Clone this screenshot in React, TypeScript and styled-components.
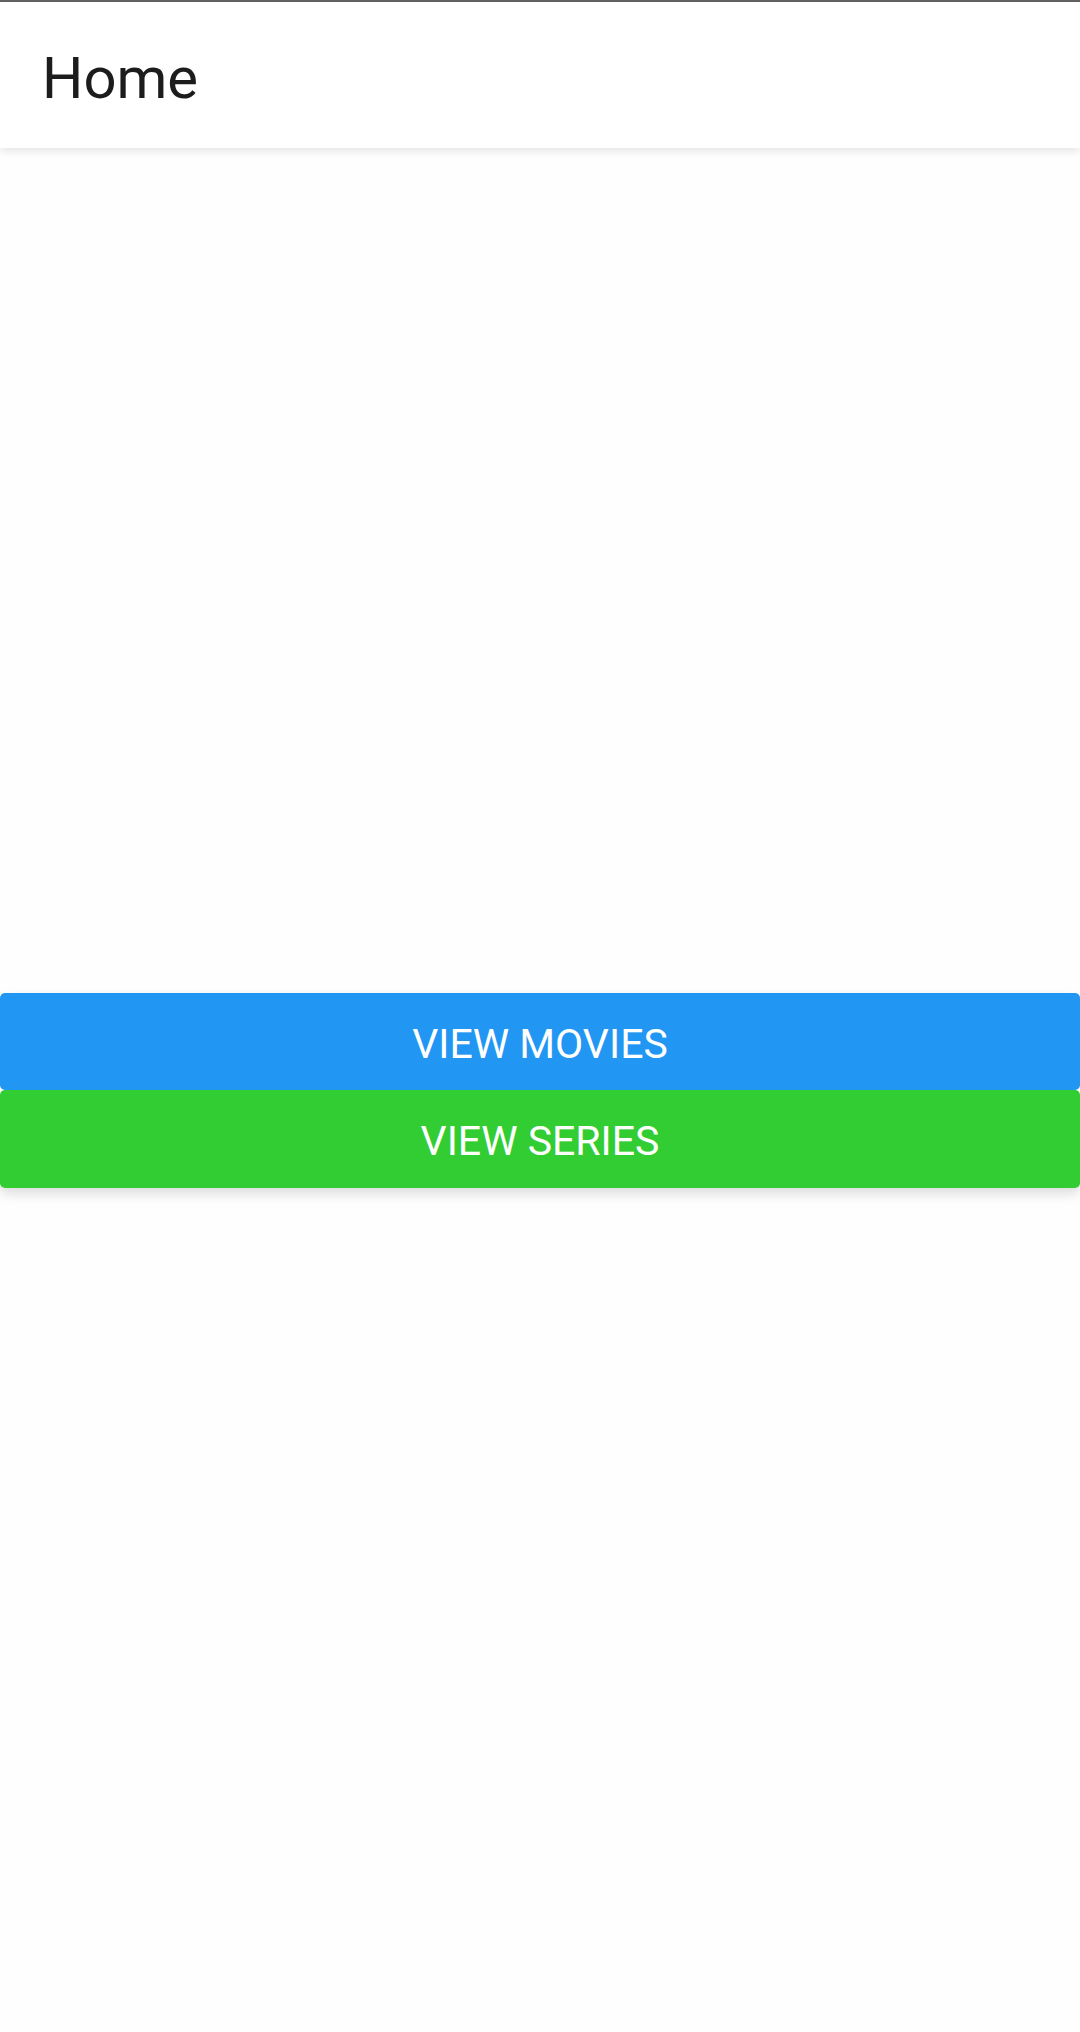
import React from "react";
import styled, { createGlobalStyle } from "styled-components";

const Global = createGlobalStyle`
  html, body { margin: 0; padding: 0; background: #fefefe; }
  body { font-family: Roboto, "Noto Sans", sans-serif; }
  * { box-sizing: border-box; }
`;

const Screen = styled.div`
  display: flex;
  flex-direction: column;
  min-height: 100vh;
  background: #fefefe;
`;

const Header = styled.header`
  height: 148px;
  border-top: 2px solid #616161;
  background: #ffffff;
  display: flex;
  align-items: center;
  padding-left: 42px;
  box-shadow: 0 3px 8px rgba(0, 0, 0, 0.1);
  position: relative;
  z-index: 1;
`;

const Title = styled.h1`
  margin: 0;
  font-family: Roboto, sans-serif;
  font-weight: 400;
  font-size: 58px;
  color: #1c1c1c;
  line-height: 1;
  padding-top: 6px;
`;

const Content = styled.main`
  flex: 1;
  display: flex;
  flex-direction: column;
  justify-content: center;
`;

const ButtonGroup = styled.div`
  display: flex;
  flex-direction: column;
  box-shadow: 0 6px 12px rgba(0, 0, 0, 0.13);
  border-radius: 5px;
`;

const ActionButton = styled.button<{ $bg: string; $first?: boolean }>`
  height: ${(p) => (p.$first ? "97px" : "98px")};
  border: none;
  border-radius: 5px;
  background: ${(p) => p.$bg};
  color: #ffffff;
  font-family: Roboto, sans-serif;
  font-weight: 400;
  font-size: 41px;
  text-transform: uppercase;
  display: flex;
  align-items: center;
  justify-content: center;
  padding: 5px 0 0;
  width: 100%;
`;

export default function App() {
  return (
    <Screen>
      <Global />
      <Header>
        <Title>Home</Title>
      </Header>
      <Content>
        <ButtonGroup>
          <ActionButton $bg="#2196f3" $first>View Movies</ActionButton>
          <ActionButton $bg="#32cd32">View Series</ActionButton>
        </ButtonGroup>
      </Content>
    </Screen>
  );
}
